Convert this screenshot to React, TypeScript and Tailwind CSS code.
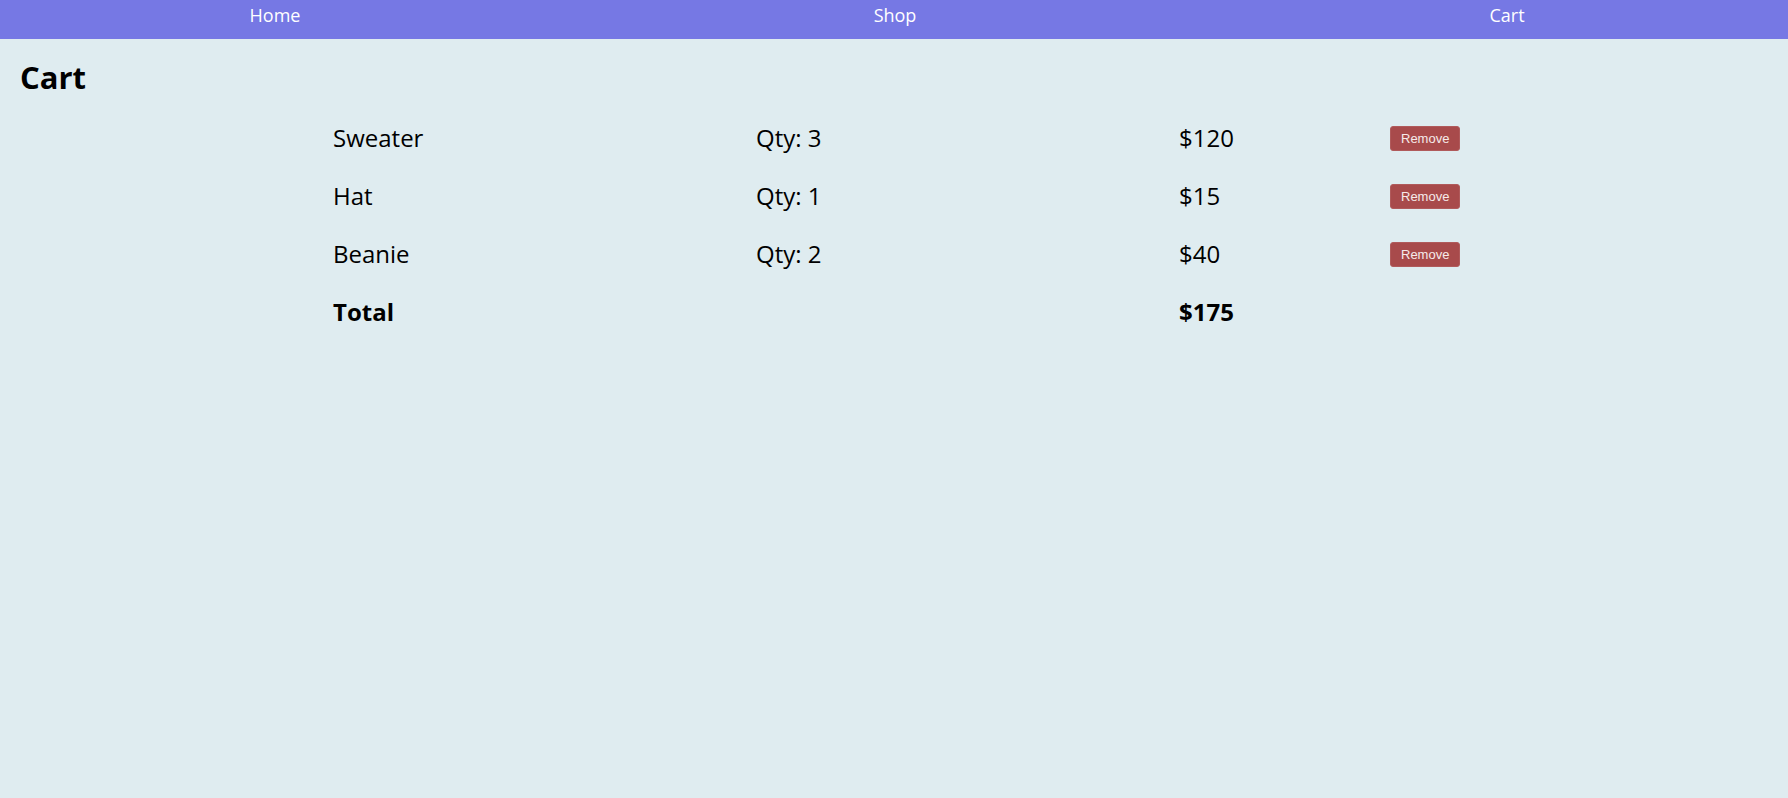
const items = [
  { name: 'Sweater', qty: 3, price: 120 },
  { name: 'Hat', qty: 1, price: 15 },
  { name: 'Beanie', qty: 2, price: 40 },
];

function NavBar() {
  return (
    <nav className="h-[39px] bg-[#7678e4] pt-[2px] text-[18px] leading-[27px] text-white">
      <ul className="grid grid-cols-[550px_690px_534px] text-center">
        <li>Home</li>
        <li>Shop</li>
        <li>Cart</li>
      </ul>
    </nav>
  );
}

function CartRow({ name, qty, price }: { name: string; qty: number; price: number }) {
  return (
    <div className="grid grid-cols-[423px_423px_211px_1fr] items-center">
      <span>{name}</span>
      <span>Qty: {qty}</span>
      <span>${price}</span>
      <div className="flex items-center">
        <button
          className="h-[25px] rounded-[3px] border border-[#b05a5b] bg-[#a84a4b] px-[10px] text-[13px] leading-[15px] text-[#f6eaea]"
          style={{ fontFamily: '"Liberation Sans", Arial, sans-serif' }}
        >
          Remove
        </button>
      </div>
    </div>
  );
}

export default function App() {
  const total = items.reduce((sum, i) => sum + i.price, 0);

  return (
    <div
      className="min-h-[798px] bg-[#dfecf0] text-black"
      style={{ fontFamily: '"Open Sans", "Noto Sans", sans-serif' }}
    >
      <NavBar />
      <main>
        <h1 className="mt-[14px] pl-[20px] text-[31px] font-bold leading-[48px]">Cart</h1>
        <div className="mx-auto mt-[19px] flex w-[1122px] flex-col gap-[22px] text-[24px] leading-[36px]">
          {items.map((item) => (
            <CartRow key={item.name} {...item} />
          ))}
          <div className="grid grid-cols-[423px_423px_211px_1fr] font-bold">
            <span>Total</span>
            <span />
            <span>${total}</span>
            <span />
          </div>
        </div>
      </main>
    </div>
  );
}
